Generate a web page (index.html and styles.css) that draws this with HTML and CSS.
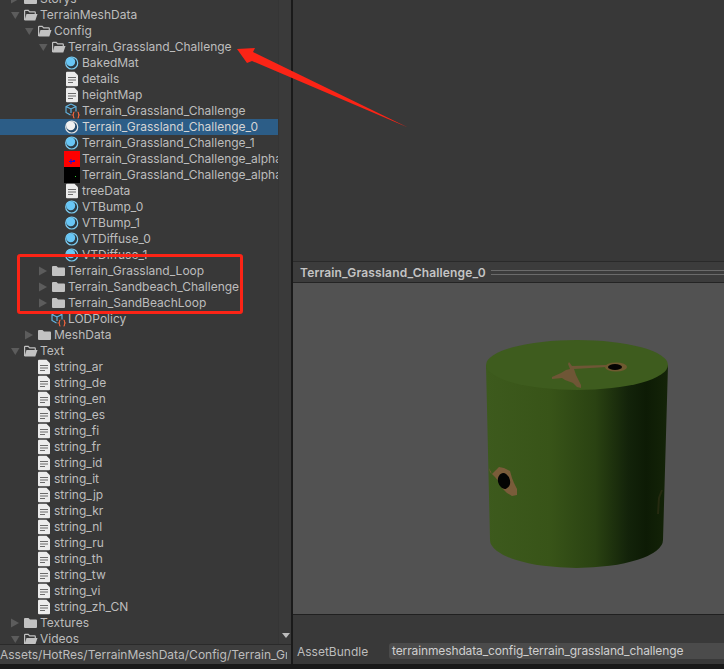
FILE: index.html
```html
<!DOCTYPE html>
<html lang="en">
<head>
    <meta charset="UTF-8">
    <meta name="viewport" content="width=device-width, initial-scale=1.0">
    <title>Project</title>
    <link rel="stylesheet" href="styles.css">
</head>
<body>
    <!-- shared icons -->
    <svg class="defs" width="0" height="0">
        <defs>
            <symbol id="arrow-open" viewBox="0 0 12 16"><path d="M2 5h8.500l-4.200 7z" fill="#5c5c5c"/></symbol>
            <symbol id="arrow-closed" viewBox="0 0 12 16"><path d="M2 3.500l8 4.500-8 4.500z" fill="#5c5c5c"/></symbol>
            <symbol id="folder" viewBox="0 0 16 16"><path d="M2 4q0-1 1-1h3.500l1.500 1.500h6q1 0 1 1v6.500q0 1-1 1h-11q-1 0-1-1z" fill="#c2c2c2"/></symbol>
            <symbol id="folder-open" viewBox="0 0 16 16"><path d="M2.600 13v-9q0-.6.600-.6h3l1.500 1.500h5q.6 0 .6.600v1.500" fill="none" stroke="#c2c2c2" stroke-width="1.200"/><path d="M2.500 13.500l2-6.500h11l-2.200 6.500z" fill="#c2c2c2"/></symbol>
            <symbol id="file" viewBox="0 0 16 16"><path d="M2 1.700q0-1 1-1h7.500l3.500 3.500v10q0 1-1 1h-10q-1 0-1-1z" fill="#ececec"/><path d="M4 6.500h8M4 9h8M4 11.500h5" stroke="#6b6b6b" stroke-width="1"/></symbol>
            <symbol id="mat" viewBox="0 0 16 16"><circle cx="7.700" cy="8" r="6" fill="#2d3a42" stroke="#7dcdf3" stroke-width="1.200"/><circle cx="6.700" cy="6.800" r="4.500" fill="#68c6f5"/></symbol>
            <symbol id="mat-sel" viewBox="0 0 16 16"><circle cx="7.700" cy="8" r="6" fill="#244a6b" stroke="#e4e4e4" stroke-width="1.200"/><circle cx="6.700" cy="6.800" r="4.500" fill="#f1f1f1"/></symbol>
            <symbol id="asset" viewBox="0 0 16 16">
                <path d="M7 1l5 2.500v5M7 1l-5 2.500v6l4.500 2.500M2 3.500l5 2.500 5-2.500M7 6v4" fill="none" stroke="#63b8e6" stroke-width="1.100"/>
                <path d="M10.500 9q-1 0-1 1v1q0 .8-.7 1 .7.200.7 1v1q0 1 1 1M13.500 9q1 0 1 1v1q0 .8.700 1-.7.200-.7 1v1q0 1-1 1" fill="none" stroke="#f0643c" stroke-width="1.100"/>
            </symbol>
        </defs>
    </svg>

    <div class="window">
        <div class="left-pane">
            <div class="tree-wrap">
                <div class="tree">
                    <div class="row lv-0"><svg class="tw"><use href="#arrow-closed"/></svg><svg class="ico"><use href="#folder"/></svg><span>Storys</span></div>
                    <div class="row lv-0"><svg class="tw"><use href="#arrow-open"/></svg><svg class="ico"><use href="#folder-open"/></svg><span>TerrainMeshData</span></div>
                    <div class="row lv-1"><svg class="tw"><use href="#arrow-open"/></svg><svg class="ico"><use href="#folder-open"/></svg><span>Config</span></div>
                    <div class="row lv-2"><svg class="tw"><use href="#arrow-open"/></svg><svg class="ico"><use href="#folder-open"/></svg><span>Terrain_Grassland_Challenge</span></div>
                    <div class="row lv-3"><i class="tw"></i><svg class="ico"><use href="#mat"/></svg><span>BakedMat</span></div>
                    <div class="row lv-3"><i class="tw"></i><svg class="ico"><use href="#file"/></svg><span>details</span></div>
                    <div class="row lv-3"><i class="tw"></i><svg class="ico"><use href="#file"/></svg><span>heightMap</span></div>
                    <div class="row lv-3"><i class="tw"></i><svg class="ico"><use href="#asset"/></svg><span>Terrain_Grassland_Challenge</span></div>
                    <div class="row lv-3 selected"><i class="tw"></i><svg class="ico"><use href="#mat-sel"/></svg><span>Terrain_Grassland_Challenge_0</span></div>
                    <div class="row lv-3"><i class="tw"></i><svg class="ico"><use href="#mat"/></svg><span>Terrain_Grassland_Challenge_1</span></div>
                    <div class="row lv-3"><i class="tw"></i>
                        <svg class="ico" viewBox="0 0 16 16"><rect width="16" height="16" fill="#fe0000"/><path d="M7 8v5M5 10.500h6M9 9.500h2" stroke="#1a14d8" stroke-width="1"/></svg>
                        <span>Terrain_Grassland_Challenge_alpha</span></div>
                    <div class="row lv-3"><i class="tw"></i>
                        <svg class="ico" viewBox="0 0 16 16"><rect width="16" height="16" fill="#000"/><rect x="11" y="9" width="1" height="1" fill="#2fd02f"/></svg>
                        <span>Terrain_Grassland_Challenge_alpha</span></div>
                    <div class="row lv-3"><i class="tw"></i><svg class="ico"><use href="#file"/></svg><span>treeData</span></div>
                    <div class="row lv-3"><i class="tw"></i><svg class="ico"><use href="#mat"/></svg><span>VTBump_0</span></div>
                    <div class="row lv-3"><i class="tw"></i><svg class="ico"><use href="#mat"/></svg><span>VTBump_1</span></div>
                    <div class="row lv-3"><i class="tw"></i><svg class="ico"><use href="#mat"/></svg><span>VTDiffuse_0</span></div>
                    <div class="row lv-3"><i class="tw"></i><svg class="ico"><use href="#mat"/></svg><span>VTDiffuse_1</span></div>
                    <div class="row lv-2"><svg class="tw"><use href="#arrow-closed"/></svg><svg class="ico"><use href="#folder"/></svg><span>Terrain_Grassland_Loop</span></div>
                    <div class="row lv-2"><svg class="tw"><use href="#arrow-closed"/></svg><svg class="ico"><use href="#folder"/></svg><span>Terrain_Sandbeach_Challenge</span></div>
                    <div class="row lv-2"><svg class="tw"><use href="#arrow-closed"/></svg><svg class="ico"><use href="#folder"/></svg><span>Terrain_SandBeachLoop</span></div>
                    <div class="row lv-2"><i class="tw"></i><svg class="ico"><use href="#asset"/></svg><span>LODPolicy</span></div>
                    <div class="row lv-1"><svg class="tw"><use href="#arrow-closed"/></svg><svg class="ico"><use href="#folder"/></svg><span>MeshData</span></div>
                    <div class="row lv-0"><svg class="tw"><use href="#arrow-open"/></svg><svg class="ico"><use href="#folder-open"/></svg><span>Text</span></div>
                    <div class="row lv-1"><i class="tw"></i><svg class="ico"><use href="#file"/></svg><span>string_ar</span></div>
                    <div class="row lv-1"><i class="tw"></i><svg class="ico"><use href="#file"/></svg><span>string_de</span></div>
                    <div class="row lv-1"><i class="tw"></i><svg class="ico"><use href="#file"/></svg><span>string_en</span></div>
                    <div class="row lv-1"><i class="tw"></i><svg class="ico"><use href="#file"/></svg><span>string_es</span></div>
                    <div class="row lv-1"><i class="tw"></i><svg class="ico"><use href="#file"/></svg><span>string_fi</span></div>
                    <div class="row lv-1"><i class="tw"></i><svg class="ico"><use href="#file"/></svg><span>string_fr</span></div>
                    <div class="row lv-1"><i class="tw"></i><svg class="ico"><use href="#file"/></svg><span>string_id</span></div>
                    <div class="row lv-1"><i class="tw"></i><svg class="ico"><use href="#file"/></svg><span>string_it</span></div>
                    <div class="row lv-1"><i class="tw"></i><svg class="ico"><use href="#file"/></svg><span>string_jp</span></div>
                    <div class="row lv-1"><i class="tw"></i><svg class="ico"><use href="#file"/></svg><span>string_kr</span></div>
                    <div class="row lv-1"><i class="tw"></i><svg class="ico"><use href="#file"/></svg><span>string_nl</span></div>
                    <div class="row lv-1"><i class="tw"></i><svg class="ico"><use href="#file"/></svg><span>string_ru</span></div>
                    <div class="row lv-1"><i class="tw"></i><svg class="ico"><use href="#file"/></svg><span>string_th</span></div>
                    <div class="row lv-1"><i class="tw"></i><svg class="ico"><use href="#file"/></svg><span>string_tw</span></div>
                    <div class="row lv-1"><i class="tw"></i><svg class="ico"><use href="#file"/></svg><span>string_vi</span></div>
                    <div class="row lv-1"><i class="tw"></i><svg class="ico"><use href="#file"/></svg><span>string_zh_CN</span></div>
                    <div class="row lv-0"><svg class="tw"><use href="#arrow-closed"/></svg><svg class="ico"><use href="#folder"/></svg><span>Textures</span></div>
                    <div class="row lv-0"><svg class="tw"><use href="#arrow-open"/></svg><svg class="ico"><use href="#folder-open"/></svg><span>Videos</span></div>
                </div>
                <div class="scrollbar"><span class="scroll-down"></span></div>
            </div>
            <div class="path-bar"><span class="path-text">Assets/HotRes/TerrainMeshData/Config/Terrain_Gr</span></div>
        </div>

        <div class="right-pane">
            <div class="inspector-empty"></div>
            <div class="preview-header">
                <span class="preview-title">Terrain_Grassland_Challenge_0</span>
                <span class="preview-grip"></span>
            </div>
            <div class="preview">
                <svg class="preview-svg" viewBox="293 283 431 331" width="431" height="331">
                    <defs>
                        <linearGradient id="body" x1="486" x2="668" y1="0" y2="0" gradientUnits="userSpaceOnUse">
                            <stop offset="0" stop-color="#3d5a1d"/>
                            <stop offset="0.35" stop-color="#385418"/>
                            <stop offset="0.6" stop-color="#2a4212"/>
                            <stop offset="0.78" stop-color="#13230a"/>
                            <stop offset="0.88" stop-color="#0d1b05"/>
                            <stop offset="1" stop-color="#142408"/>
                        </linearGradient>
                    </defs>
                    <path d="M486 365L490 540A86.500 28 0 0 0 663 540L668 365z" fill="url(#body)"/>
                    <ellipse cx="577" cy="365" rx="91" ry="25" fill="#3e5c1e"/>
                    <!-- worn patches on the top -->
                    <path d="M569 362l3 4 34-1 1 2-33 2 2 6 5 10 0 3-4-1-4-4-8-3-3-2-10 1 0-2 9-4 5-3 4-1-2-5z" fill="#6f5636"/>
                    <ellipse cx="616" cy="367" rx="11" ry="4.500" fill="#6f5a30"/>
                    <ellipse cx="615" cy="367" rx="7" ry="3" fill="#050403"/>
                    <!-- worn patch on the side -->
                    <path d="M489 468l3 6 4-4 3-3 5 1 6 3 2 7 2 5 3 6 0 6-5 1-5-3-5-5-3-6-4-5-5-5z" fill="#7a5c3a"/>
                    <ellipse cx="504" cy="481" rx="6" ry="8" transform="rotate(-15 504 481)" fill="#040403"/>
                    <path d="M662 490l-3 8-1 16" fill="none" stroke="#252a10" stroke-width="2"/>
                </svg>
            </div>
            <div class="bundle-bar">
                <label class="bundle-label">AssetBundle</label>
                <div class="bundle-input">terrainmeshdata_config_terrain_grassland_challenge</div>
            </div>
        </div>
    </div>
    <div class="bottom-strip"></div>

    <!-- red annotations drawn over the editor -->
    <div class="mark-box"></div>
    <svg class="mark-arrow" viewBox="0 0 724 669" width="724" height="669">
        <path d="M237 49L255 48L253 52L408 127.500L252 61L247 63z" fill="#fb2416"/>
    </svg>
</body>
</html>
```

FILE: styles.css
```css
html, body {
    margin: 0;
    padding: 0;
    height: 100%;
    overflow: hidden;
}
body {
    position: relative;
    background-color: #191919;
    color: #bdbdbd;
    font-family: Inter, "Noto Sans", sans-serif;
    font-size: 12px;
    width: 724px;
    height: 669px;
}
.defs {
    position: absolute;
}
.window {
    display: flex;
    height: 664px;
}
.left-pane {
    width: 291px;
    display: flex;
    flex-direction: column;
    background-color: #383838;
}
.tree-wrap {
    flex: 1;
    display: flex;
    min-height: 0;
}
.tree {
    width: 278px;
    margin-top: -9px;
    overflow: hidden;
}
.row {
    display: flex;
    align-items: center;
    height: 16px;
    white-space: nowrap;
    overflow: hidden;
}
.row span {
    margin-top: -2px;
}
.row.selected {
    background-color: #2c5d87;
    color: #d4d4d4;
}
.lv-0 { padding-left: 9px; }
.lv-1 { padding-left: 23px; }
.lv-2 { padding-left: 37px; }
.lv-3 { padding-left: 51px; }
.tw {
    flex: none;
    display: block;
    width: 12px;
    height: 16px;
}
.ico {
    flex: none;
    width: 16px;
    height: 16px;
    margin-left: 1px;
    margin-right: 2px;
}
.scrollbar {
    width: 12px;
    position: relative;
    background-color: #3a3a3a;
    border-left: 1px solid #353535;
}
.scroll-down {
    position: absolute;
    left: 3px;
    bottom: 6px;
    border-left: 4px solid transparent;
    border-right: 4px solid transparent;
    border-top: 5px solid #bdbdbd;
}
.path-bar {
    height: 20px;
    line-height: 20px;
    background-color: #3e3e3e;
    border-top: 1px solid #2a2a2a;
    box-sizing: border-box;
    padding-right: 4px;
}
.path-text {
    display: block;
    overflow: hidden;
    white-space: nowrap;
}
.right-pane {
    flex: 1;
    display: flex;
    flex-direction: column;
    border-left: 2px solid #1a1a1a;
    min-width: 0;
}
.inspector-empty {
    height: 261px;
    background-color: #383838;
}
.preview-header {
    height: 22px;
    box-sizing: border-box;
    display: flex;
    align-items: center;
    gap: 5px;
    padding-left: 7px;
    background-color: #3c3c3c;
    border-top: 1px solid #2a2a2a;
    border-bottom: 1px solid #242424;
}
.preview-title {
    font-weight: 600;
    letter-spacing: 0.15px;
    color: #c4c4c4;
    white-space: nowrap;
}
.preview-grip {
    flex: 1;
    height: 3px;
    border-top: 1px solid #6b6b6b;
    border-bottom: 1px solid #6b6b6b;
}
.preview {
    height: 331px;
    background-color: #525252;
}
.preview-svg {
    display: block;
}
.bundle-bar {
    flex: 1;
    display: flex;
    align-items: flex-end;
    padding-bottom: 5px;
    box-sizing: border-box;
    background-color: #393939;
    border-top: 1px solid #202020;
}
.bundle-label {
    width: 96px;
    padding-left: 4px;
    box-sizing: border-box;
}
.bundle-input {
    flex: 1;
    height: 16px;
    line-height: 15px;
    padding-left: 3px;
    background-color: #4b4b4b;
    border-radius: 3px 0 0 3px;
    color: #cfcfcf;
    letter-spacing: -0.12px;
    white-space: nowrap;
    overflow: hidden;
}
.bottom-strip {
    height: 5px;
    background-color: #191919;
}
.mark-box {
    position: absolute;
    left: 17px;
    top: 254px;
    width: 220px;
    height: 54px;
    border: 3px solid #fb2416;
    border-radius: 3px;
}
.mark-arrow {
    position: absolute;
    left: 0;
    top: 0;
}
```
